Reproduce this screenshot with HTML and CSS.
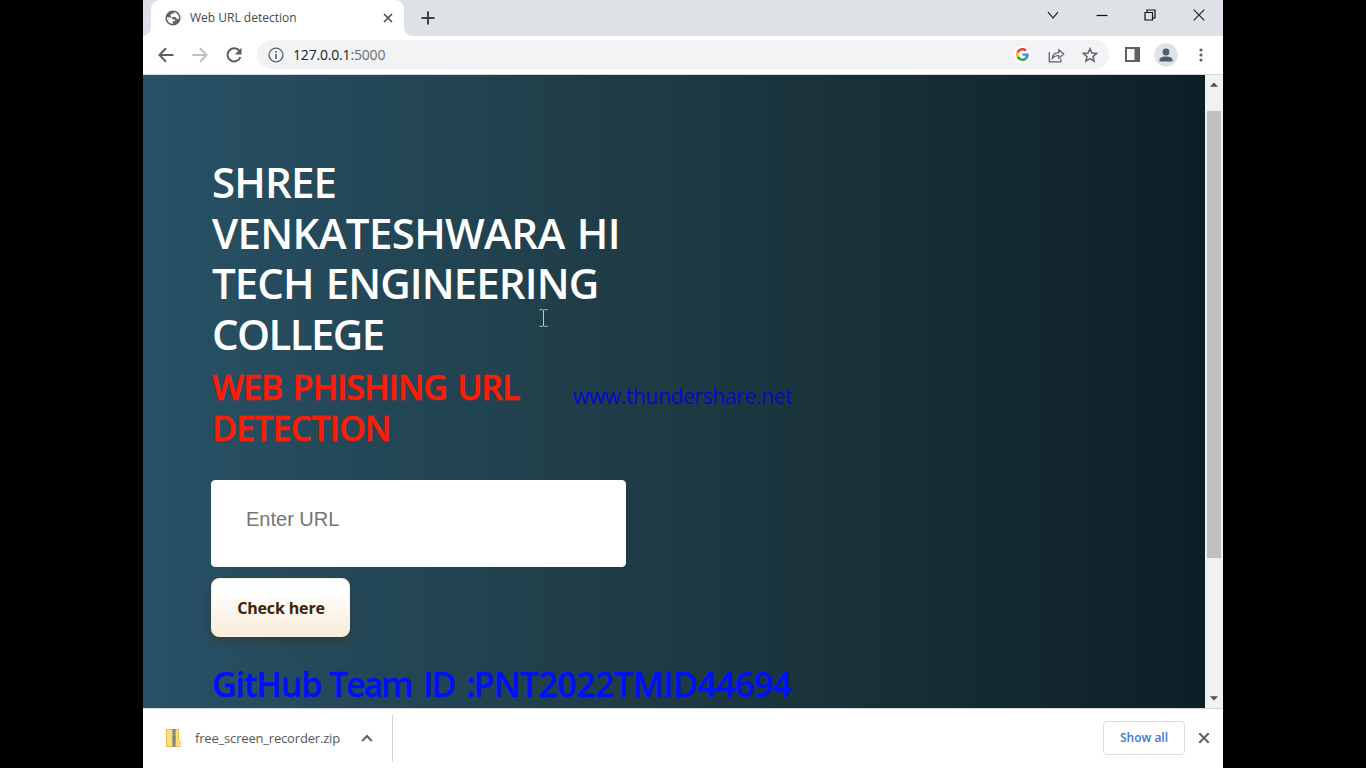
FILE: index.html
```html
<!DOCTYPE html>
<html lang="en">
<head>
<meta charset="utf-8">
<title>Web URL detection</title>
<link rel="stylesheet" href="styles.css">
</head>
<body>
<div class="window">
  <header class="tabstrip">
    <div class="tab">
      <svg class="globe" width="16" height="16" viewBox="0 0 16 16"><circle cx="8" cy="8" r="6.800" fill="#fff" stroke="#5f6368" stroke-width="1.600"/><path d="M9 1.200C5 .8 1.500 3.500 1.200 7.200h3.600c1.700 0 2.900.8 2.900 2.300h2.200v1.700H7.800v3.600c4 .2 7-2.700 7-6.500-1 1.200-2.300 1.100-3.300.3-.7-.6-.7-1.500-1.500-1.500H7.200c-1.200 0-1.700-.8-1.700-1.600 0-1.300.9-1.700 2-1.700h1z" fill="#5f6368"/></svg>
      <span class="tab-title">Web URL detection</span>
      <svg class="tab-close" width="10" height="10" viewBox="0 0 10 10"><path d="M1 1l8 8M9 1L1 9" stroke="#4b4f53" stroke-width="1.700"/></svg>
    </div>
    <svg class="new-tab" width="14" height="14" viewBox="0 0 14 14"><path d="M7 .5v13M.5 7h13" stroke="#3c4043" stroke-width="2"/></svg>
    <div class="controls">
      <svg width="12" height="12" viewBox="0 0 12 12"><path d="M1 3l5 6 5-6" fill="none" stroke="#333" stroke-width="1.200"/></svg>
      <svg width="12" height="12" viewBox="0 0 12 12"><path d="M.5 6.500h11" stroke="#111" stroke-width="1.200"/></svg>
      <svg width="12" height="12" viewBox="0 0 12 12"><path d="M1 3.500h7.500V11H1zM3 3V1h8v8H9" fill="none" stroke="#111" stroke-width="1.200"/></svg>
      <svg width="12" height="12" viewBox="0 0 12 12"><path d="M.7.700l10.600 10.600M11.300.700L.7 11.300" stroke="#222" stroke-width="1.200"/></svg>
    </div>
  </header>
  <nav class="toolbar">
    <svg class="nav-icon" width="16" height="16" viewBox="0 0 16 16"><path d="M15.500 8H2M8 1.300L1.500 8 8 14.700" fill="none" stroke="#5b5f63" stroke-width="2"/></svg>
    <svg class="nav-icon" width="16" height="16" viewBox="0 0 16 16"><path d="M.5 8H14M8 1.300L14.500 8 8 14.700" fill="none" stroke="#bcbec0" stroke-width="2"/></svg>
    <svg class="nav-icon" width="16" height="16" viewBox="0 0 16 16"><path d="M13.700 4.200A6.600 6.600 0 1 0 14.400 10" fill="none" stroke="#5b5f63" stroke-width="2"/><path d="M15.500.700v6.800H8.800z" fill="#5b5f63"/></svg>
    <div class="address">
      <svg width="16" height="16" viewBox="0 0 16 16"><circle cx="8" cy="8" r="6.900" fill="none" stroke="#5f6368" stroke-width="1.400"/><path d="M8 7v5M8 4v1.700" stroke="#5f6368" stroke-width="1.700"/></svg>
      <span class="url">127.0.0.1<span class="port">:5000</span></span>
      <span class="google"><svg width="13" height="13" viewBox="0 0 48 48"><path fill="#EA4335" d="M24 9.500c3.500 0 6.700 1.200 9.200 3.600l6.900-6.900C35.900 2.400 30.500 0 24 0 14.600 0 6.500 5.400 2.600 13.200l8 6.200C12.400 13.700 17.700 9.500 24 9.500z"/><path fill="#4285F4" d="M47 24.500c0-1.600-.2-3.100-.4-4.500H24v9h12.900c-.6 3-2.300 5.500-4.800 7.200l7.700 6c4.500-4.200 7.200-10.400 7.200-17.700z"/><path fill="#FBBC05" d="M10.500 28.600a14.500 14.500 0 0 1 0-9.200l-8-6.200a24 24 0 0 0 0 21.600z"/><path fill="#34A853" d="M24 48c6.500 0 11.900-2.100 15.900-5.800l-7.700-6c-2.200 1.500-4.900 2.300-8.200 2.300-6.300 0-11.600-4.200-13.500-9.900l-8 6.200C6.500 42.600 14.600 48 24 48z"/></svg></span>
      <svg class="share" width="17" height="16" viewBox="0 0 17 16"><path d="M1.300 5v9.800h11.500v-3" fill="none" stroke="#5f6368" stroke-width="1.300"/><path d="M4.300 11.500c.3-3.800 2.500-5.900 6.500-5.900V2.800L15.800 7l-5 4.200V8.500c-3 0-4.800.7-6.500 3z" fill="none" stroke="#5f6368" stroke-width="1.200"/></svg>
      <svg class="star" width="16" height="16" viewBox="0 0 16 16"><path d="M8 1.700l1.900 4.400 4.700.4-3.600 3.100 1.100 4.600L8 11.700l-4.100 2.500L5 9.600 1.400 6.500l4.700-.4z" fill="none" stroke="#5f6368" stroke-width="1.500"/></svg>
    </div>
    <svg class="panel" width="15" height="15" viewBox="0 0 15 15"><path d="M0 0h15v15H0zM2 2v11h7.500V2z" fill="#5f6368" fill-rule="evenodd"/></svg>
    <svg class="avatar" width="24" height="24" viewBox="0 0 24 24"><circle cx="12" cy="12" r="11.700" fill="#dee1e6"/><circle cx="12" cy="9" r="3.400" fill="#4c5c6e"/><path d="M5.500 18.500v-1.700c0-2 3-3.300 6.500-3.300s6.500 1.300 6.500 3.300v1.700z" fill="#4c5c6e"/></svg>
    <svg class="menu" width="4" height="14" viewBox="0 0 4 14"><g fill="#5f6368"><circle cx="2" cy="2" r="1.600"/><circle cx="2" cy="7" r="1.600"/><circle cx="2" cy="12" r="1.600"/></g></svg>
  </nav>
  <div class="viewport">
    <main class="page">
      <h1 class="college"><span class="l1">SHREE</span><span class="l2">VENKATESHWARA HI</span><span class="l3">TECH ENGINEERING</span><span class="l4">COLLEGE</span></h1>
      <h2 class="subject"><span class="s1">WEB PHISHING URL</span><span class="s2">DETECTION</span></h2>
      <input class="url-input" type="text" placeholder="Enter URL">
      <button class="check" type="button"><span>Check here</span></button>
      <h2 class="team">GitHub <b class="word">Team</b><b class="label"> ID :</b><b class="code">PNT2022TMID44694</b></h2>
      <div class="watermark">www.thundershare.net</div>
      <svg class="cursor" width="9" height="18" viewBox="0 0 9 18"><path d="M.5.700h3l1 .6 1-.6h3M4.500 1v16M.5 17.300h3l1-.6 1 .6h3" fill="none" stroke="#bfc5c8" stroke-width="1"/></svg>
    </main>
    <div class="scrollbar">
      <svg class="arrow" width="8" height="5" viewBox="0 0 8 5"><path d="M0 4.800L4 .5l4 4.300z" fill="#505050"/></svg>
      <div class="thumb"></div>
      <svg class="arrow" width="8" height="5" viewBox="0 0 8 5"><path d="M0 .2L4 4.500 8 .2z" fill="#505050"/></svg>
    </div>
  </div>
  <footer class="downloads">
    <div class="item">
      <svg class="zip" width="15" height="18" viewBox="0 0 15 18"><path d="M.5.500h12v11l1.500.5v5.500H.5z" fill="#fbdc78" stroke="#e7bd4d"/><path d="M6 .5h4v17H6z" fill="#b9b39b"/><path d="M8 0v18" stroke="#69695f" stroke-width="2.500" stroke-dasharray="1.200 1"/><path d="M6.500 7h3v4h-3z" fill="#85857a"/><path d="M11.500 12h2v5h-2z" fill="#ffe48c"/></svg>
      <span class="file">free_screen_recorder.zip</span>
      <svg class="caret" width="12" height="8" viewBox="0 0 12 8"><path d="M1.200 7L6 2l4.800 5" fill="none" stroke="#5f6368" stroke-width="2"/></svg>
    </div>
    <button class="show-all" type="button"><span>Show all</span></button>
    <svg class="close" width="12" height="12" viewBox="0 0 12 12"><path d="M1.300 1.300l9.400 9.400M10.700 1.300l-9.400 9.400" stroke="#5f6368" stroke-width="2"/></svg>
  </footer>
</div>
</body>
</html>
```
FILE: styles.css
```css
* { box-sizing: border-box; }
body { margin: 0; background: #000; font-family: "Open Sans", "Noto Sans", sans-serif; overflow: hidden; }
svg { display: block; flex: none; }
h1, h2 { margin: 0; font-weight: 600; white-space: nowrap; }
h1 span, h2 span { display: block; }
.window { width: 1080px; height: 768px; margin-left: 143px; display: flex; flex-direction: column; background: #fff; overflow: hidden; }

.tabstrip { height: 36px; flex: none; display: flex; background: #dee1e6; padding-left: 8px; }
.tab { width: 253px; height: 36px; padding: 0 11px 1px 14px; display: flex; align-items: center; background: #fff; border-radius: 9px 9px 0 0; position: relative; }
.tab::before, .tab::after { content: ""; position: absolute; bottom: 0; width: 8px; height: 8px; }
.tab::before { left: -8px; background: radial-gradient(circle at 0 0, #dee1e6 7.500px, #fff 8px); }
.tab::after { right: -8px; background: radial-gradient(circle at 100% 0, #dee1e6 7.500px, #fff 8px); }
.tab-title { margin-left: 9px; flex: 1; font-size: 12px; color: #45494d; white-space: nowrap; }
.new-tab { margin: 11px 0 0 17px; }
.controls { margin: 9px 18.500px 0 auto; display: flex; gap: 36.500px; }

.toolbar { height: 39px; flex: none; display: flex; align-items: center; border-bottom: 1px solid #d5d8db; padding: 0 0 1px 15px; background: #fff; }
.nav-icon { margin-right: 18px; }
.address { width: 852px; height: 29px; margin-left: -3px; padding-left: 11px; border-radius: 15px; background: #f1f3f4; display: flex; align-items: center; }
.url { flex: 1; margin-left: 9px; font-size: 14px; letter-spacing: -0.180px; color: #202124; }
.port { color: #696d71; }
.google { width: 18px; height: 18px; border-radius: 50%; background: #fff; display: flex; align-items: center; justify-content: center; }
.share { margin-left: 17px; }
.star { margin: 0 11px 0 17px; }
.panel { margin-left: 16px; }
.avatar { margin-left: 14px; }
.menu { margin-left: 21px; }

.viewport { height: 633px; flex: none; display: flex; }
.page { width: 1062px; position: relative; padding: 82px 0 0 69px; background: linear-gradient(to left, #0d1f26, #1e3a43, #285166); overflow: hidden; }
.college { font-size: 42px; line-height: 50.600px; color: #fff; }
.l1 { letter-spacing: -0.850px; }
.l2 { letter-spacing: -0.650px; word-spacing: 2px; }
.l3 { letter-spacing: -0.900px; word-spacing: 2px; }
.l4 { letter-spacing: -1.600px; }
.subject { margin-top: 8px; font-size: 34px; line-height: 40.200px; color: #ff1b05; -webkit-text-stroke: .4px #ff1b05; }
.s1 { letter-spacing: -1.060px; word-spacing: 2.500px; }
.s2 { letter-spacing: -0.900px; }
.url-input { display: block; width: 415px; height: 87px; margin: 32px 0 0 -1px; padding: 0 34px 8px; border: 1px solid #fff; border-radius: 4px; background: #fff; font: 20px "Liberation Sans", Arial, sans-serif; outline: 0; }
.url-input::placeholder { color: #757575; opacity: 1; }
.check { display: block; width: 139px; height: 59px; margin: 11px 0 0 -1px; padding: 1px 0 0 1px; border: 1px solid #fcefdc; border-radius: 8px; background: linear-gradient(#fff 20%, #f9ecd8); box-shadow: 0 4px 8px rgba(60, 45, 20, .4); font: 700 16px "Open Sans", "Noto Sans", sans-serif; letter-spacing: -0.150px; color: #402108; }
.team { margin-top: 27px; font-size: 34px; line-height: 40px; letter-spacing: -1.100px; color: #0010fb; -webkit-text-stroke: .3px #0010fb; }
.team b { font-weight: 600; }
.word { letter-spacing: -2.200px; }
.label { letter-spacing: -2px; word-spacing: 5px; }
.code { letter-spacing: -0.600px; }
.watermark { position: absolute; left: 430px; top: 307px; font-size: 21px; line-height: 28px; letter-spacing: -0.350px; color: #0508cf; white-space: nowrap; }
.cursor { position: absolute; left: 396px; top: 234px; }
.scrollbar { width: 18px; background: #f1f1f1; display: flex; flex-direction: column; align-items: center; padding: 7px 0; }
.thumb { width: 14px; height: 447px; margin: 24px 0 auto; background: #c1c1c1; }

.downloads { height: 60px; flex: none; display: flex; align-items: center; background: #fff; border-top: 1px solid #d5d8db; padding-bottom: 1px; }
.item { width: 250px; height: 47px; padding-left: 23px; display: flex; align-items: center; border-right: 1px solid #cfd1d4; }
.file { margin-left: 14px; width: 146px; font-size: 13px; letter-spacing: -0.180px; color: #55595d; white-space: nowrap; }
.caret { margin-left: 20px; }
.show-all { margin-left: auto; width: 82px; height: 34px; padding: 0 0 2px; border: 1px solid #dadce0; border-radius: 4px; background: #fff; font: 600 12px "Open Sans", "Noto Sans", sans-serif; color: #3c78d8; }
.close { margin: 0 13px; }
```
